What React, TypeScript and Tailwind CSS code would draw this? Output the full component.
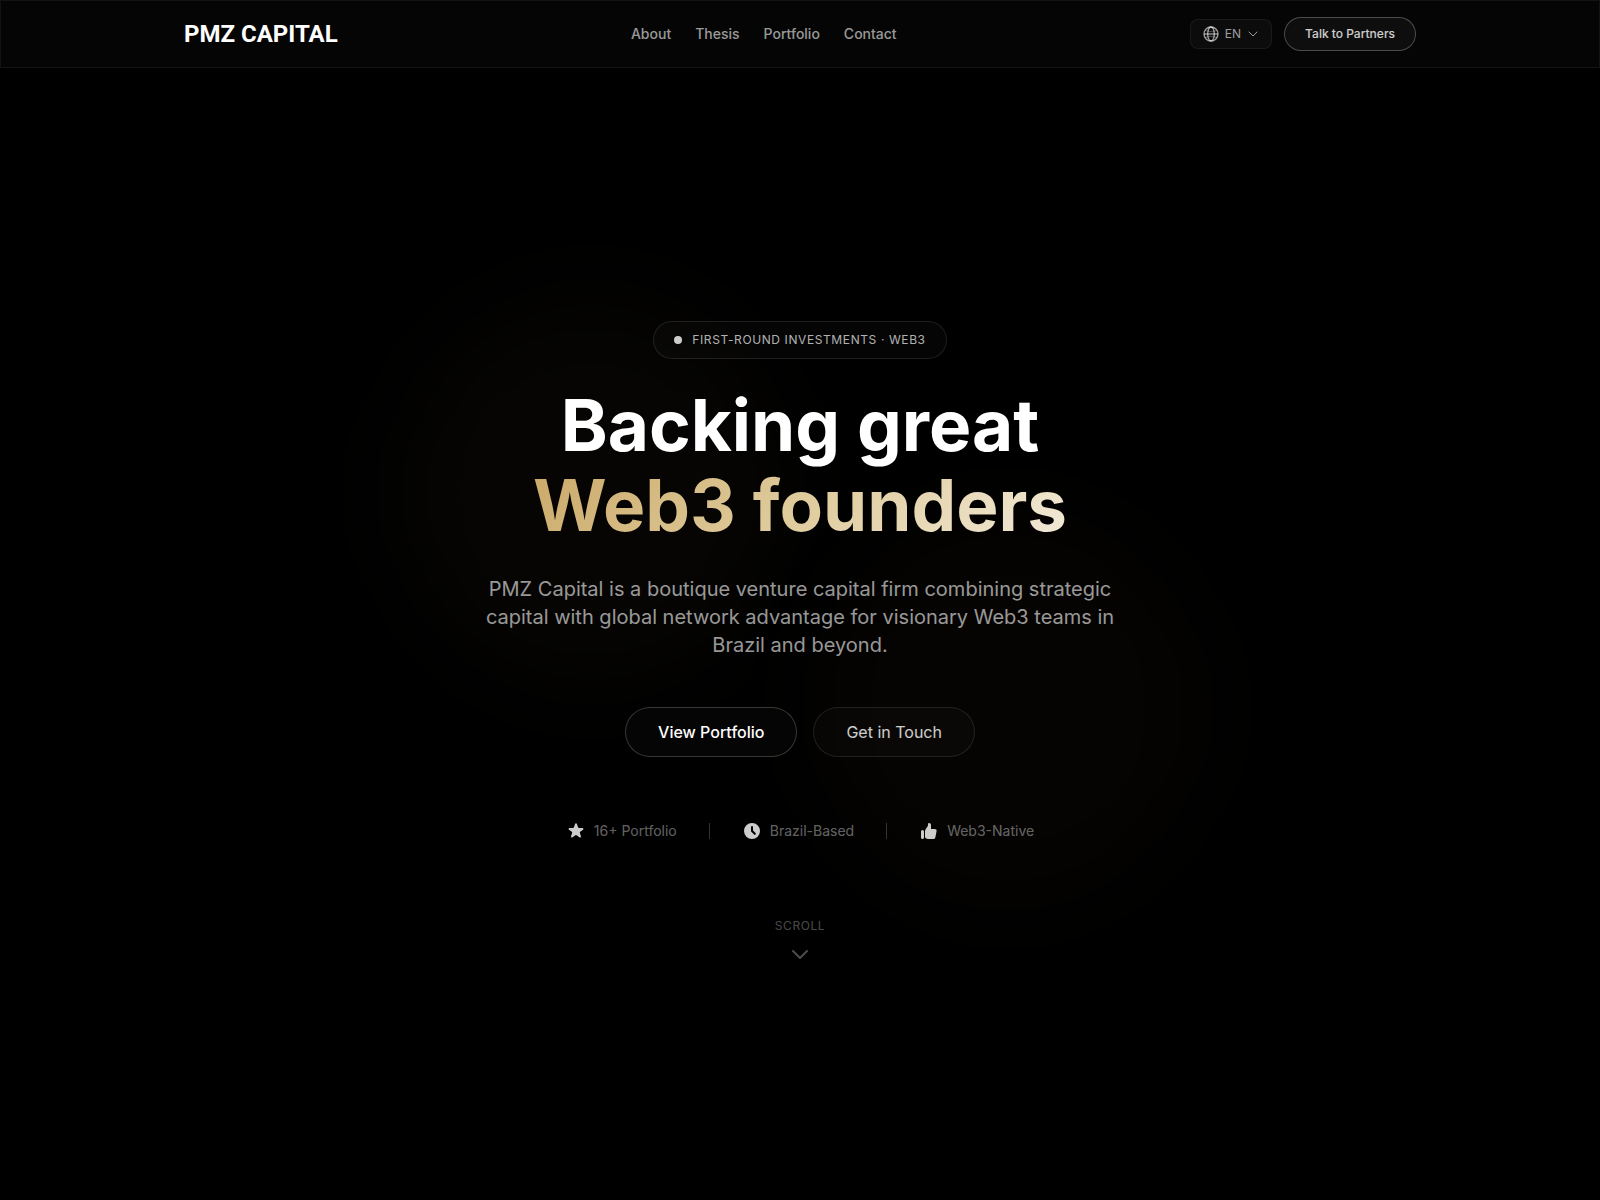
import React from "react";

const navLinks = ["About", "Thesis", "Portfolio", "Contact"];

const stats = [
  {
    label: "16+ Portfolio",
    path: "M9.049 2.927c.3-.921 1.603-.921 1.902 0l1.07 3.292a1 1 0 00.95.69h3.462c.969 0 1.371 1.24.588 1.81l-2.8 2.034a1 1 0 00-.364 1.118l1.07 3.292c.3.921-.755 1.688-1.54 1.118l-2.8-2.034a1 1 0 00-1.175 0l-2.8 2.034c-.784.57-1.838-.197-1.539-1.118l1.07-3.292a1 1 0 00-.364-1.118L2.98 8.72c-.783-.57-.38-1.81.588-1.81h3.461a1 1 0 00.951-.69l1.07-3.292z",
  },
  {
    label: "Brazil-Based",
    path: "M10 18a8 8 0 100-16 8 8 0 000 16zm1-12a1 1 0 10-2 0v4a1 1 0 00.293.707l2.828 2.829a1 1 0 101.415-1.415L11 9.586V6z",
  },
  {
    label: "Web3-Native",
    path: "M2 10.5a1.5 1.5 0 113 0v6a1.5 1.5 0 01-3 0v-6zM6 10.333v5.43a2 2 0 001.106 1.79l.05.025A4 4 0 008.943 18h5.416a2 2 0 001.962-1.608l1.2-6A2 2 0 0015.56 8H12V4a2 2 0 00-2-2 1 1 0 00-1 1v.667a4 4 0 01-.8 2.4L6.8 7.933a4 4 0 00-.8 2.4z",
  },
];

function Header() {
  return (
    <header className="relative z-10 border border-white/[0.06] bg-white/[0.02]">
      <div className="mx-auto flex max-w-7xl items-center justify-between px-6 py-4">
        <a
          href="#top"
          className="whitespace-nowrap font-['Roboto',sans-serif] text-2xl font-bold text-white"
        >
          PMZ CAPITAL
        </a>
        <nav className="flex gap-6 text-sm font-medium text-white/60">
          {navLinks.map((label) => (
            <a key={label} href={`#${label.toLowerCase()}`}>
              {label}
            </a>
          ))}
        </nav>
        <div className="flex items-center gap-3">
          <button
            type="button"
            className="flex items-center gap-1.5 rounded-lg border border-white/[0.06] bg-white/[0.03] px-3 py-1.5 text-xs text-white/60"
          >
            <svg className="size-4" viewBox="0 0 16 16" fill="none" stroke="currentColor" strokeWidth="1.3" aria-hidden="true">
              <circle cx="8" cy="8" r="7" />
              <ellipse cx="8" cy="8" rx="3.3" ry="7" />
              <path d="M1 8h14" />
              <path d="M2.500 4.500c3 1.200 8 1.200 11 0M2.500 11.500c3-1.200 8-1.200 11 0" strokeOpacity="0.4" />
            </svg>
            EN
            <svg className="size-3" viewBox="0 0 12 12" fill="none" stroke="currentColor" strokeLinecap="round" strokeLinejoin="round" aria-hidden="true">
              <path d="M2 4l4 4 4-4" />
            </svg>
          </button>
          <button
            type="button"
            className="rounded-full border border-white/25 bg-white/[0.04] px-5 py-2 text-xs font-medium text-white/80"
          >
            Talk to Partners
          </button>
        </div>
      </div>
    </header>
  );
}

export default function App() {
  return (
    <div
      id="top"
      className="relative flex min-h-screen flex-col overflow-hidden bg-black font-['Inter',sans-serif] text-white"
    >
      <div className="absolute top-1/4 left-1/4 size-96 rounded-full bg-[#d4b46a]/[0.027] blur-[48px]" />
      <div className="absolute right-1/4 bottom-1/4 size-96 rounded-full bg-[#d08a3c]/[0.028] blur-[48px]" />

      <Header />

      <main className="relative flex flex-1 flex-col items-center justify-center px-6 pt-[19px] text-center">
        <p className="flex items-center gap-2.5 rounded-full border border-white/10 bg-white/[0.02] px-5 py-2.5 text-xs tracking-wider text-white/70 uppercase">
          <span className="size-2 rounded-full bg-white/80" />
          First-Round Investments · Web3
        </p>

        <h1 className="mt-[26px] text-[71px] leading-20 font-bold">
          Backing great
          <br />
          <span className="inline-block bg-linear-135 from-[#cba968] via-[#dfcb9c] to-[#f2ead8] bg-clip-text text-transparent">
            Web3 founders
          </span>
        </h1>

        <p className="mt-[30px] max-w-2xl text-xl leading-7 text-white/60">
          PMZ Capital is a boutique venture capital firm combining strategic capital with global
          network advantage for visionary Web3 teams in Brazil and beyond.
        </p>

        <div className="mt-12 flex flex-wrap justify-center gap-4">
          <a
            href="#portfolio"
            className="rounded-full border border-white/20 bg-white/[0.02] px-8 py-3 font-medium text-white"
          >
            View Portfolio
          </a>
          <a
            href="#contact"
            className="rounded-full border border-white/10 bg-white/[0.02] px-8 py-3 text-white/80"
          >
            Get in Touch
          </a>
        </div>

        <ul className="mt-16 flex flex-wrap items-center justify-center gap-8 text-sm text-white/40">
          {stats.map(({ label, path }, i) => (
            <React.Fragment key={label}>
              {i > 0 && <li aria-hidden="true" className="h-4 w-px bg-white/20" />}
              <li className="flex items-center gap-2">
                <svg className="size-5 text-white/80" viewBox="0 0 20 20" fill="currentColor" aria-hidden="true">
                  <path fillRule="evenodd" d={path} />
                </svg>
                {label}
              </li>
            </React.Fragment>
          ))}
        </ul>

        <a href="#about" className="mt-[77px] flex flex-col items-center gap-2 text-xs tracking-wider text-white/30">
          SCROLL
          <svg className="size-6" viewBox="0 0 24 24" fill="none" stroke="currentColor" strokeWidth="2" strokeLinecap="round" strokeLinejoin="round" aria-hidden="true">
            <path d="M19 9l-7 7-7-7" />
          </svg>
        </a>
      </main>
    </div>
  );
}
